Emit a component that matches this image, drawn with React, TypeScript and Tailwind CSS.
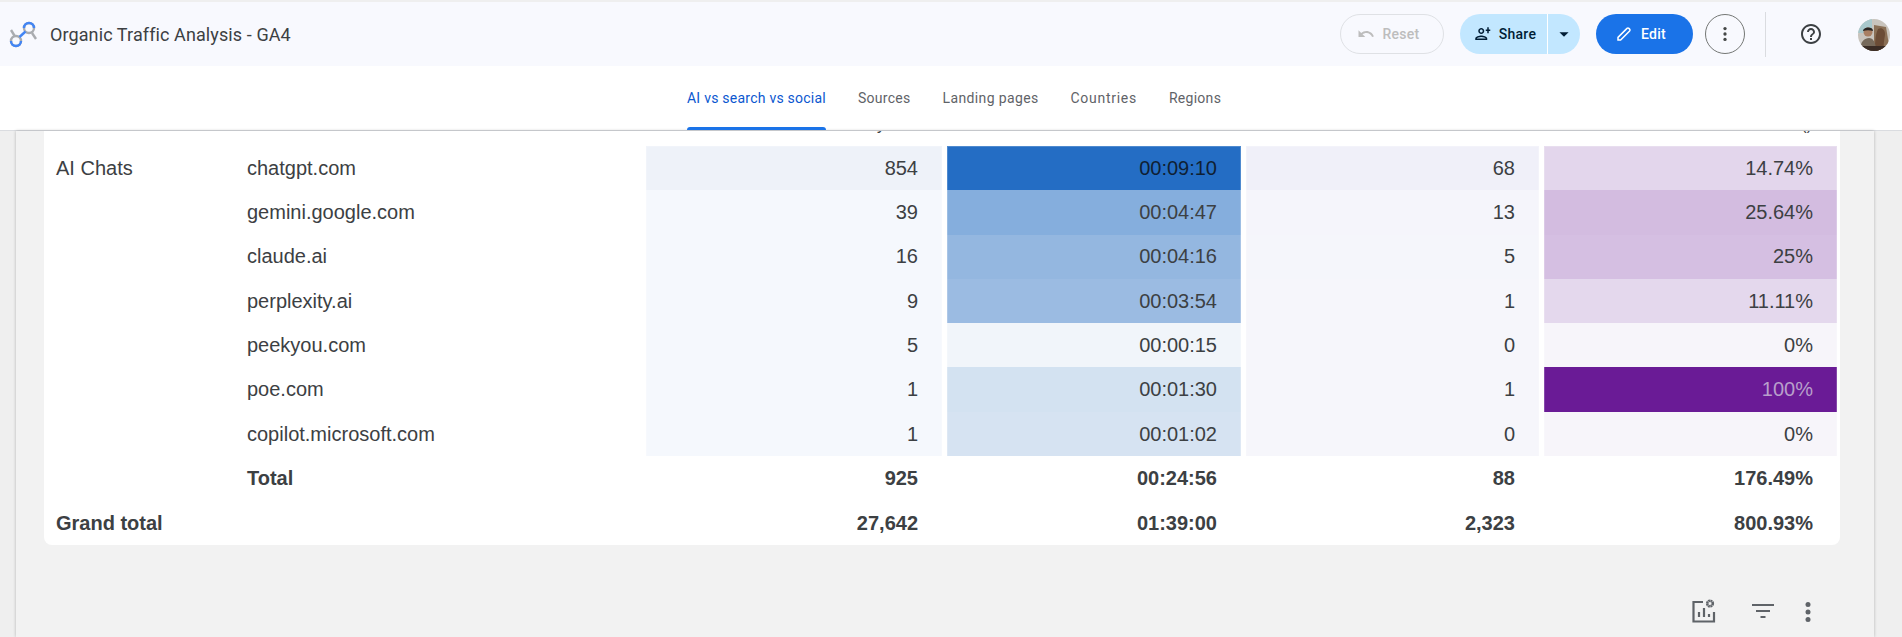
import React from "react";

type Row = { group?: string; name: string; v: [string, string][] };

const rows: Row[] = [
  { group: "AI Chats", name: "chatgpt.com", v: [["854", "bg-[#eef2f9]"], ["00:09:10", "bg-[#246dc4]"], ["68", "bg-[#f0f0f9]"], ["14.74%", "bg-[#e3d6ec]"]] },
  { name: "gemini.google.com", v: [["39", "bg-[#f5f8fd]"], ["00:04:47", "bg-[#85aedd]"], ["13", "bg-[#f5f5fb]"], ["25.64%", "bg-[#d3bce0]"]] },
  { name: "claude.ai", v: [["16", "bg-[#f5f8fd]"], ["00:04:16", "bg-[#94b7e0]"], ["5", "bg-[#f5f6fb]"], ["25%", "bg-[#d5bfe2]"]] },
  { name: "perplexity.ai", v: [["9", "bg-[#f5f8fd]"], ["00:03:54", "bg-[#9bbbe2]"], ["1", "bg-[#f6f6fb]"], ["11.11%", "bg-[#e4d8ed]"]] },
  { name: "peekyou.com", v: [["5", "bg-[#f5f8fd]"], ["00:00:15", "bg-[#f1f5fa]"], ["0", "bg-[#f6f6fb]"], ["0%", "bg-[#f7f5fa]"]] },
  { name: "poe.com", v: [["1", "bg-[#f5f8fd]"], ["00:01:30", "bg-[#d3e2f1]"], ["1", "bg-[#f6f6fb]"], ["100%", "bg-[#6a1b96]"]] },
  { name: "copilot.microsoft.com", v: [["1", "bg-[#f5f8fd]"], ["00:01:02", "bg-[#d6e3f2]"], ["0", "bg-[#f6f6fb]"], ["0%", "bg-[#f7f5fa]"]] },
];

const grid = "grid grid-cols-[197px_395px_296px_294px_293px_293px] gap-x-[5px]";
const tabs: [string, string][] = [
  ["Sources", "tracking-[0.28px]"],
  ["Landing pages", "tracking-[0.36px]"],
  ["Countries", "tracking-[0.72px]"],
  ["Regions", "tracking-[0.28px]"],
];

function Logo() {
  return (
    <svg width="30" height="30" viewBox="0 0 30 30" fill="none" strokeWidth="2.4">
      <path d="M3 10 L7 16.5" stroke="#a9acb0" />
      <path d="M24 13 L28 19" stroke="#a9acb0" />
      <circle cx="8" cy="21" r="5" stroke="#a9acb0" />
      <path d="M3 21a5 5 0 0 0 10 0" stroke="#4285f4" />
      <circle cx="21" cy="8" r="5" stroke="#a9acb0" />
      <path d="M16 8a5 5 0 0 1 10 0" stroke="#4285f4" />
      <path d="M11.5 17 L17.5 11.5" stroke="#4285f4" />
    </svg>
  );
}

function Avatar() {
  return (
    <svg width="32" height="32" viewBox="0 0 32 32" className="rounded-full">
      <rect width="32" height="32" fill="#c9c4bd" />
      <rect width="14" height="14" fill="#a8c8cc" />
      <path d="M16 6l12 2 4 24H16z" fill="#8a6f55" />
      <path d="M20 10c4-2 7 1 7 5s-2 8-1 17H17c0-7 0-16 3-22z" fill="#6b4c36" />
      <circle cx="10" cy="13" r="4.5" fill="#a97f63" />
      <path d="M5 12c0-4 10-5 10 0-3-1-7-1-10 0z" fill="#2a2522" />
      <path d="M2 32c0-10 5-13 9-13s7 4 7 13z" fill="#76695a" />
      <path d="M0 27h32v5H0z" fill="#3a2c25" />
    </svg>
  );
}

export default function App() {
  return (
    <div className="h-[637px] w-[1902px] overflow-hidden flex flex-col bg-[#efefef] font-['Liberation_Sans',sans-serif] text-[#3c4043]">
      <header className="mt-[2px] h-[64px] shrink-0 bg-[#f8f9fe] flex items-center font-['Roboto',sans-serif]">
        <div className="ml-[8px] mt-[2px]"><Logo /></div>
        <div className="ml-[12px] text-[18px] tracking-[0.1px] text-[#3c4043]">Organic Traffic Analysis - GA4</div>
        <div className="ml-auto flex items-center mr-[12px]">
          <button className="w-[104px] h-[40px] rounded-full border border-[#dfe1e5] flex items-center justify-center gap-[8px] pr-[8px] text-[14px] tracking-[0.25px] font-medium text-[#bdbdbd]">
            <svg width="18" height="18" viewBox="0 0 24 24" fill="#bdbdbd"><path d="M12.5 8c-2.65 0-5.05.99-6.9 2.6L2 7v9h9l-3.62-3.62c1.39-1.16 3.16-1.88 5.12-1.88 3.54 0 6.55 2.31 7.6 5.5l2.37-.78C21.08 11.03 17.15 8 12.5 8z" /></svg>
            Reset
          </button>
          <div className="ml-[16px] w-[120px] h-[40px] rounded-full bg-[#c2e7ff] flex items-center text-[#001d35] text-[14px] tracking-[0.25px] font-medium">
            <div className="w-[88px] h-full flex items-center justify-center gap-[8px] border-r border-white pl-[2px]">
              <svg width="18" height="18" viewBox="0 0 24 24" fill="#001d35"><path d="M15 12c2.21 0 4-1.79 4-4s-1.79-4-4-4-4 1.79-4 4 1.79 4 4 4zm0-6c1.1 0 2 .9 2 2s-.9 2-2 2-2-.9-2-2 .9-2 2-2zm0 8c-2.67 0-8 1.34-8 4v2h16v-2c0-2.66-5.33-4-8-4zm-6 4c.22-.72 3.31-2 6-2 2.7 0 5.8 1.29 6 2H9z" transform="translate(-4 0)" /><path d="M19 10V7h-2V5h2V2h2v3h2v2h-2v3z" transform="translate(0 1)" /></svg>
              Share
            </div>
            <div className="flex-1 flex items-center justify-center">
              <svg width="22" height="22" viewBox="0 0 24 24" fill="#001d35"><path d="M7 10l5 5 5-5z" /></svg>
            </div>
          </div>
          <button className="ml-[16px] w-[97px] h-[40px] rounded-full bg-[#1a73e8] text-white text-[14px] tracking-[0.25px] font-medium flex items-center justify-center gap-[8px] pr-[8px]">
            <svg width="18" height="18" viewBox="0 0 24 24" fill="none" stroke="#fff" strokeWidth="2"><path d="M4 20v-3.5L16 4.5a1.8 1.8 0 0 1 2.5 0l1 1a1.8 1.8 0 0 1 0 2.5L7.5 20z" /></svg>
            Edit
          </button>
          <button className="ml-[12px] w-[40px] h-[40px] rounded-full border border-[#747775] flex items-center justify-center">
            <svg width="20" height="20" viewBox="0 0 24 24" fill="#444746"><circle cx="12" cy="5.5" r="2" /><circle cx="12" cy="12" r="2" /><circle cx="12" cy="18.5" r="2" /></svg>
          </button>
          <div className="ml-[20px] w-px h-[45px] bg-[#dadce0]" />
          <svg className="ml-[33px]" width="24" height="24" viewBox="0 0 24 24" fill="#3c4043"><path d="M11 18h2v-2h-2v2zm1-16C6.48 2 2 6.48 2 12s4.48 10 10 10 10-4.48 10-10S17.52 2 12 2zm0 18c-4.41 0-8-3.59-8-8s3.59-8 8-8 8 3.59 8 8-3.59 8-8 8zm0-14c-2.21 0-4 1.79-4 4h2c0-1.1.9-2 2-2s2 .9 2 2c0 2-3 1.75-3 5h2c0-2.25 3-2.5 3-5 0-2.21-1.79-4-4-4z" /></svg>
          <div className="ml-[35px] mt-[2px]"><Avatar /></div>
        </div>
      </header>

      <nav className="h-[65px] shrink-0 bg-white border-b border-[#dadce0] flex justify-start pl-[687px] gap-[32px] font-['Roboto',sans-serif] text-[14px] font-[450] text-[#5f6368]">
        <div className="relative h-full flex items-center text-[#0b57d0] pt-[1px] tracking-[0.24px]">
          AI vs search vs social
          <div className="absolute left-0 right-0 bottom-0 h-[3px] rounded-t-[3px] bg-[#1a73e8]" />
        </div>
        {tabs.map(([t, c]) => (
          <div key={t} className={`${c} h-full flex items-center pt-[1px]`}>{t}</div>
        ))}
      </nav>

      <main className="flex-1 min-h-0 ml-[16px] w-[1858px] bg-[#f2f2f2] shadow-[0_0_3px_rgba(0,0,0,0.25)] flex flex-col pl-[28px]">
        <div className="w-[1796px] h-[414px] shrink-0 bg-white rounded-b-lg text-[20px] overflow-hidden">
          <div className={`${grid} h-[15px] overflow-hidden text-[16px] leading-[16px]`}>
            <div className="col-start-3 text-right pr-[57px] -mt-[14px]">Sessions by</div>
            <div className="col-start-6 text-right pr-[25px] -mt-[14px]">Rate ()</div>
          </div>
          {rows.map((r, i) => (
            <div key={r.name} className={`${grid} h-[44.3px] items-stretch`}>
              <div className="pl-[12px] flex items-center pb-[0.6px]">{r.group}</div>
              <div className="pl-[1px] flex items-center pb-[0.6px]">{r.name}</div>
              {r.v.map(([val, bg], j) => (
                <div
                  key={j}
                  className={`${bg} ${i === 0 ? "border-t" : ""} border-x border-white/20 flex items-center justify-end pr-[23px] pb-[0.6px] ${val === "100%" ? "text-[#b89fcb]" : ""} ${val === "00:09:10" ? "text-[#0f1f33]" : ""}`}
                >
                  {val}
                </div>
              ))}
            </div>
          ))}
          <div className={`${grid} h-[45px] font-bold items-center pb-[2px]`}>
            <div />
            <div className="pl-[1px]">Total</div>
            <div className="text-right pr-[24px]">925</div>
            <div className="text-right pr-[24px]">00:24:56</div>
            <div className="text-right pr-[24px]">88</div>
            <div className="text-right pr-[24px]">176.49%</div>
          </div>
          <div className={`${grid} h-[44px] font-bold items-center`}>
            <div className="pl-[12px] col-span-2">Grand total</div>
            <div className="text-right pr-[24px]">27,642</div>
            <div className="text-right pr-[24px]">01:39:00</div>
            <div className="text-right pr-[24px]">2,323</div>
            <div className="text-right pr-[24px]">800.93%</div>
          </div>
        </div>

        <div className="flex items-center justify-end pr-[54px] mt-[52px] text-[#5f6368]">
          <svg width="24" height="24" viewBox="0 0 24 24" fill="none" stroke="#5f6368" strokeWidth="2.2">
            <path d="M11 3H1.5V22.5H22V13" />
            <path d="M7 18v-5M12 18V9M17 18v-3" />
            <circle cx="18" cy="4.5" r="2.8" strokeWidth="2.6" strokeDasharray="1.8 0.4" />
          </svg>
          <svg className="ml-[35px]" width="24" height="24" viewBox="0 0 24 24" fill="#5f6368"><path d="M1 5h22v2H1zM5 11h14v2H5zM9.5 17h5v2h-5z" /></svg>
          <svg className="ml-[21px] mt-[3px]" width="24" height="24" viewBox="0 0 24 24" fill="#5f6368"><circle cx="12" cy="4.5" r="2.5" /><circle cx="12" cy="12" r="2.5" /><circle cx="12" cy="19.5" r="2.5" /></svg>
        </div>
      </main>
    </div>
  );
}
